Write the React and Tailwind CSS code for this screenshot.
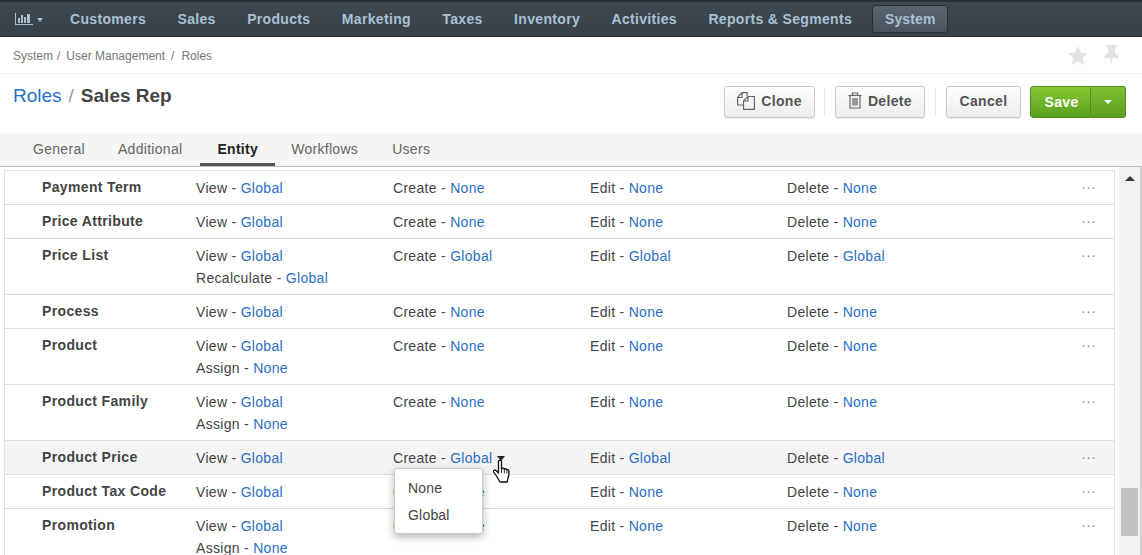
import React from "react";

const navItems = ["Customers", "Sales", "Products", "Marketing", "Taxes", "Inventory", "Activities", "Reports & Segments"];

const rows = [
  { name: "Payment Term", view: "Global", create: "None", edit: "None", del: "None" },
  { name: "Price Attribute", view: "Global", create: "None", edit: "None", del: "None" },
  { name: "Price List", view: "Global", create: "Global", edit: "Global", del: "Global", extra: ["Recalculate", "Global"] },
  { name: "Process", view: "Global", create: "None", edit: "None", del: "None" },
  { name: "Product", view: "Global", create: "None", edit: "None", del: "None", extra: ["Assign", "None"] },
  { name: "Product Family", view: "Global", create: "None", edit: "None", del: "None", extra: ["Assign", "None"] },
  { name: "Product Price", view: "Global", create: "Global", edit: "Global", del: "Global", hover: true },
  { name: "Product Tax Code", view: "Global", create: "None", edit: "None", del: "None" },
  { name: "Promotion", view: "Global", create: "None", edit: "None", del: "None", extra: ["Assign", "None"] },
];

const Perm = ({ label, value }) => (
  <div>
    {label} - <span className="text-[#2a6fc4]">{value}</span>
  </div>
);

const ChartIcon = () => (
  <svg width="18" height="12" viewBox="0 0 18 12" fill="#a9c0d3">
    <rect x="0" y="0" width="1" height="12" />
    <rect x="0" y="11" width="18" height="1" />
    <rect x="3" y="5" width="2" height="5" />
    <rect x="6" y="2" width="2" height="8" />
    <rect x="9" y="4" width="2" height="6" />
    <rect x="12" y="1" width="3" height="9" />
  </svg>
);

const CloneIcon = () => (
  <svg width="18" height="18" viewBox="0 0 18 18" fill="none" stroke="#666" strokeWidth="1.2">
    <path d="M6.500 13H.600V5.500L5 .600h5v4" />
    <path d="M5 .600V5.500H.600" />
    <path d="M6.500 17.400V9l4.500-4.500h6.400v12.900z" />
    <path d="M11 4.500V9H6.500" />
  </svg>
);

const TrashIcon = () => (
  <svg width="14" height="17" viewBox="0 0 14 17" fill="none" stroke="#666" strokeWidth="1.200">
    <path d="M0.500 3.500h13" />
    <path d="M4.500 3.500V1h5v2.500" />
    <path d="M2 3.500V16h10V3.500" />
    <path d="M5 6v7.500M7 6v7.500M9 6v7.500" strokeWidth="1.300" />
  </svg>
);

const StarIcon = () => (
  <svg width="20" height="19" viewBox="0 0 21 20" fill="#e3e3e3">
    <path d="M10.500 0l3.100 6.800 7.400.8-5.500 5 1.500 7.400-6.500-3.700L4 20l1.500-7.400L0 7.600l7.400-.8z" />
  </svg>
);

const PinIcon = () => (
  <svg width="15" height="20" viewBox="0 0 15 21" fill="#e3e3e3">
    <path d="M2 0h11v2.500h-2v6L15 12v2H8.500L7.500 21l-1-7H0v-2l4-3.500v-6H2z" />
  </svg>
);

const HandCursor = () => (
  <svg width="17" height="24" viewBox="0 0 17 24" fill="#fff" stroke="#111" strokeWidth="1.300" strokeLinejoin="round">
    <path d="M5.500 2.500c0-1.800 3-1.800 3 0V10c.8-1.200 2.500-1 2.800.3 1-1 2.400-.6 2.600.6.900-.5 2.100 0 2.100 1.100 0 3-.1 5.500-1.200 7.500l-.6 3.500H7l-3.500-6L.7 13c-.7-1.500 1-2.700 2.300-1.500l2.500 2.500z" />
    <path d="M8.500 10v4M11.300 10.500v4M13.900 11v3.500" strokeWidth="0.900" />
  </svg>
);

const Row = ({ row }) => (
  <div className={`flex border-b border-[#dcdcdc] pt-1.5 pb-[5px] text-sm leading-[22px] tracking-[0.3px] text-[#444] ${row.hover ? "bg-[#f4f4f4]" : "bg-white"}`}>
    <div className="box-content w-[154px] -mt-px pl-[37px] font-bold tracking-[0.35px]">{row.name}</div>
    <div className="w-[197px] shrink-0">
      <Perm label="View" value={row.view} />
      {row.extra && <Perm label={row.extra[0]} value={row.extra[1]} />}
    </div>
    <div className="relative w-[197px] shrink-0">
      <Perm label="Create" value={row.create} />
      {row.hover && (
        <>
          <span className="absolute left-[104px] top-[9px] h-0 w-0 border-x-[4px] border-t-[5px] border-x-transparent border-t-[#222]" />
          <div className="absolute left-[100px] top-[12px] z-30"><HandCursor /></div>
          <div className="absolute left-px top-[21px] z-20 h-[66px] w-[89px] rounded-[3px] border border-[#ccc] bg-white py-1.5 pl-[13px] leading-[27px] tracking-[0.2px] shadow-[0_3px_8px_rgba(0,0,0,0.3)]">
            <div>None</div>
            <div>Global</div>
          </div>
        </>
      )}
    </div>
    <div className="w-[197px] shrink-0"><Perm label="Edit" value={row.edit} /></div>
    <div className="flex-1"><Perm label="Delete" value={row.del} /></div>
    <div className="w-[33px] shrink-0 -mt-px tracking-[0.5px] text-[#8a8a8a]">···</div>
  </div>
);

const Button = ({ children, className = "px-3" }) => (
  <button className={`flex h-8 items-center gap-1.5 rounded-[3px] border border-[#c9c9c9] bg-gradient-to-b from-white to-[#ececec] pb-0.5 text-sm font-bold tracking-[0.35px] text-[#555] shadow-[0_1px_1px_rgba(0,0,0,0.08)] ${className}`}>
    {children}
  </button>
);

export default function App() {
  return (
    <div className="flex h-[555px] w-[1142px] flex-col overflow-hidden bg-white font-['Liberation_Sans',Arial,sans-serif]">
      {/* top nav */}
      <div className="flex h-[37px] shrink-0 items-center border-b border-t-2 border-b-[#23292f] border-t-[#2b3138] bg-gradient-to-b from-[#3e4851] to-[#37414a] pl-[15px] text-sm font-bold tracking-[0.33px] text-[#a9c0d3]">
        <div className="flex w-[55px] items-center gap-[4px]">
          <ChartIcon />
          <span className="mt-px h-0 w-0 border-x-[3.500px] border-t-[4px] border-x-transparent border-t-[#a9c0d3]" />
        </div>
        <div className="flex items-center gap-[31.4px]">
          {navItems.map((item) => (
            <span key={item}>{item}</span>
          ))}
        </div>
        <span className="ml-[20px] flex h-[28px] items-center rounded-[3px] border border-[#2a3036] bg-gradient-to-b from-[#5a646e] to-[#4a545e] px-[12px] tracking-[0.1px]">System</span>
      </div>

      {/* breadcrumb */}
      <div className="flex h-[37px] shrink-0 items-center justify-between border-b border-[#efefef] pl-[13px] pr-[23px] text-xs text-[#777]">
        <div className="mt-0.5 flex gap-1">
          <span>System</span><span>/</span><span className="ml-0.5">User Management</span><span className="ml-0.5">/</span><span className="ml-[3px]">Roles</span>
        </div>
        <div className="flex items-center gap-4">
          <StarIcon />
          <PinIcon />
        </div>
      </div>

      {/* title and actions */}
      <div className="flex h-[59px] shrink-0 items-start justify-between pl-[13px] pr-4 pt-[11px]">
        <div className="flex items-center gap-[7px] text-[19px] leading-[22px]">
          <span className="text-[#2a6fc4]">Roles</span>
          <span className="text-[#999]">/</span>
          <span className="font-bold text-[#444]">Sales Rep</span>
        </div>
        <div className="flex items-center">
          <Button><CloneIcon />Clone</Button>
          <span className="ml-[9px] mr-[10px] h-7 w-px bg-[#e8e8e8]" />
          <Button><TrashIcon />Delete</Button>
          <span className="mx-[10px] h-7 w-px bg-[#e8e8e8]" />
          <Button className="w-[75px] justify-center">Cancel</Button>
          <div className="ml-[9px] mt-px flex h-8 text-sm font-bold tracking-[0.35px] text-white">
            <button className="w-[61px] rounded-l-[3px] border border-[#4f8f1c] bg-gradient-to-b from-[#86c833] to-[#5aa020] pl-0.5">Save</button>
            <button className="flex w-[35px] items-center justify-center rounded-r-[3px] border border-l-0 border-[#4f8f1c] bg-gradient-to-b from-[#7dbf30] to-[#5aa020]">
              <span className="h-0 w-0 border-x-4 border-t-4 border-x-transparent border-t-white" />
            </button>
          </div>
        </div>
      </div>

      {/* tabs */}
      <div className="flex h-[34px] shrink-0 border-b border-[#bdbdbd] bg-[#f5f5f5] pl-4 text-sm leading-[32px] tracking-[0.3px] text-[#666]">
        <span className="px-[17px]">General</span>
        <span className="pl-4 pr-[18px]">Additional</span>
        <span className="h-[33px] border-b-[3px] border-[#555] px-[17px] font-bold text-[#222]">Entity</span>
        <span className="pl-4 pr-[17px]">Workflows</span>
        <span className="px-[17px]">Users</span>
      </div>

      {/* table + scrollbar */}
      <div className="flex min-h-0 flex-1 pt-[3px]">
        <div className="ml-1 w-[1111px] shrink-0 border-x border-t border-[#e2e2e2]">
          {rows.map((row) => (
            <Row key={row.name} row={row} />
          ))}
        </div>
        <div className="ml-[4px] -mt-[3px] flex w-[23px] flex-col items-center border-r-2 border-[#d0d0d0] bg-[#f1f1f1] pt-[9px]">
          <span className="h-0 w-0 border-x-[5px] border-b-[5px] border-x-transparent border-b-[#333]" />
          <div className="mt-[307px] h-[48px] w-[17px] bg-[#c1c1c1]" />
        </div>
      </div>
    </div>
  );
}
